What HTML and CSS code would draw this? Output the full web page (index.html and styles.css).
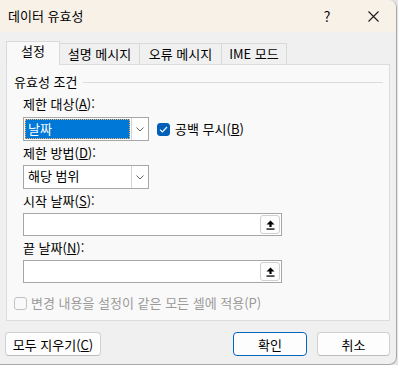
FILE: index.html
```html
<!DOCTYPE html>
<html lang="ko">
<head>
  <meta charset="UTF-8">
  <meta name="viewport" content="width=device-width, initial-scale=1.0">
  <title>데이터 유효성</title>
  <link rel="stylesheet" href="styles.css">
</head>
<body>
  <div class="window">
    <div class="titlebar">
      <span class="title">데이터 유효성</span>
      <span class="caption-btn help">?</span>
      <span class="caption-btn close">
        <svg width="11" height="11" viewBox="0 0 11 11"><path d="M0.5 0.5 L10.5 10.5 M10.5 0.5 L0.5 10.5" stroke="#1a1a1a" stroke-width="1.1" fill="none"/></svg>
      </span>
    </div>

    <div class="content">
      <div class="tabs">
        <div class="tab active tab-w1">설정</div>
        <div class="tab tab-w2">설명 메시지</div>
        <div class="tab tab-w3">오류 메시지</div>
        <div class="tab tab-w4">IME 모드</div>
      </div>

      <div class="panel">
        <div class="group-title">
          <span>유효성 조건</span>
          <span class="rule"></span>
        </div>

        <div class="fields">
          <div class="field-label first">제한 대상(<u>A</u>):</div>
          <div class="row">
            <div class="combo">
              <span class="combo-value"><span class="selected">날짜</span></span>
              <span class="combo-arrow">
                <svg width="8" height="5" viewBox="0 0 8 5"><path d="M0.5 0.5 L4 4 L7.5 0.5" stroke="#606060" stroke-width="1" fill="none"/></svg>
              </span>
            </div>
            <label class="check">
              <span class="box checked">
                <svg width="9" height="7" viewBox="0 0 9 7"><path d="M1 3.6 L3.4 6 L8 1" stroke="#fff" stroke-width="1.2" fill="none"/></svg>
              </span>
              <span>공백 무시(<u>B</u>)</span>
            </label>
          </div>

          <div class="field-label">제한 방법(<u>D</u>):</div>
          <div class="combo">
            <span class="combo-value"><span class="plain">해당 범위</span></span>
            <span class="combo-arrow">
              <svg width="8" height="5" viewBox="0 0 8 5"><path d="M0.5 0.5 L4 4 L7.5 0.5" stroke="#606060" stroke-width="1" fill="none"/></svg>
            </span>
          </div>

          <div class="field-label">시작 날짜(<u>S</u>):</div>
          <div class="ref-input">
            <span class="ref-btn">
              <svg width="9" height="10" viewBox="0 0 9 10"><path d="M4.5 0.5 L8.5 4.5 L5.6 4.5 L5.6 7 L3.4 7 L3.4 4.5 L0.5 4.5 Z" fill="#000"/><rect x="0.5" y="8.4" width="8" height="1.3" fill="#000"/></svg>
            </span>
          </div>

          <div class="field-label">끝 날짜(<u>N</u>):</div>
          <div class="ref-input">
            <span class="ref-btn">
              <svg width="9" height="10" viewBox="0 0 9 10"><path d="M4.5 0.5 L8.5 4.5 L5.6 4.5 L5.6 7 L3.4 7 L3.4 4.5 L0.5 4.5 Z" fill="#000"/><rect x="0.5" y="8.4" width="8" height="1.3" fill="#000"/></svg>
            </span>
          </div>
        </div>

        <label class="check disabled">
          <span class="box"></span>
          <span>변경 내용을 설정이 같은 모든 셀에 적용(P)</span>
        </label>
      </div>

      <div class="footer">
        <button class="btn btn-clear">모두 지우기(<u>C</u>)</button>
        <span class="spacer"></span>
        <button class="btn btn-ok">확인</button>
        <button class="btn btn-cancel">취소</button>
      </div>
    </div>
  </div>
</body>
</html>
```

FILE: styles.css
```css
* {
  box-sizing: border-box;
}
body {
  margin: 0;
  background-color: #e4e4e4;
  font-family: "Noto Sans CJK KR", sans-serif;
  font-size: 13px;
  color: #000;
}
u {
  text-decoration-thickness: 1px;
  text-underline-offset: 1px;
}
.window {
  width: 397px;
  height: 365px;
  background-color: #f0f0f0;
  border-right: 1px solid #a8a8a8;
  border-bottom: 1px solid #a8a8a8;
  border-radius: 0 8px 8px 0;
  overflow: hidden;
}
.titlebar {
  height: 32px;
  display: flex;
  align-items: center;
  background-color: #f7f1e8;
}
.title {
  flex: 1;
  padding-left: 8px;
  line-height: 16px;
}
.caption-btn {
  width: 46px;
  height: 32px;
  display: flex;
  align-items: center;
  justify-content: center;
}
.help {
  font-size: 14px;
}
.content {
  padding: 0 6px 0 6px;
}
.tabs {
  display: flex;
  align-items: flex-end;
  height: 23px;
  margin-top: 9px;
}
.tab {
  height: 21px;
  line-height: 19px;
  text-align: center;
  border: 1px solid #d9d9d9;
  border-bottom: none;
  background-color: #f0f0f0;
  margin-left: -1px;
}
.tab.active {
  height: 24px;
  line-height: 18px;
  margin-left: 0;
  margin-bottom: -1px;
  background-color: #f9f9f9;
  position: relative;
  z-index: 1;
}
.tab-w1 { width: 54px; }
.tab-w2 { width: 81px; }
.tab-w3 { width: 83px; }
.tab-w4 { width: 66px; }

.panel {
  height: 257px;
  border: 1px solid #dcdcdc;
  background-color: #f9f9f9;
  padding: 9px 6px 0 7px;
}
.group-title {
  display: flex;
  align-items: center;
  gap: 6px;
  line-height: 16px;
}
.rule {
  flex: 1;
  height: 1px;
  background-color: #dcdcdc;
  margin-top: 1px;
}
.fields {
  padding-left: 9px;
}
.field-label {
  line-height: 16px;
  height: 16px;
  margin-top: 4px;
  margin-bottom: 4px;
}
.field-label.first {
  margin-top: 6px;
  margin-bottom: 5px;
}
.row {
  display: flex;
  align-items: center;
}
.combo {
  width: 126px;
  height: 24px;
  display: flex;
  border: 1px solid #a6a6a6;
  background-color: #fff;
}
.combo-value {
  flex: 1;
  padding: 1px;
  display: flex;
}
.combo-value span {
  flex: 1;
  line-height: 18px;
  padding-left: 3px;
}
.combo-value .selected {
  background-color: #0078d7;
  color: #fff;
  border: 1px dotted #ffb062;
  padding-left: 2px;
}
.combo-arrow {
  width: 17px;
  border-left: 1px solid #d4d4d4;
  display: flex;
  align-items: center;
  justify-content: center;
}
.check {
  display: flex;
  align-items: center;
  gap: 5px;
  line-height: 16px;
}
.row .check {
  margin-left: 8px;
}
.box {
  width: 13px;
  height: 13px;
  border: 1px solid #c2c2c2;
  border-radius: 3px;
  display: flex;
  align-items: center;
  justify-content: center;
}
.box.checked {
  background-color: #005fb8;
  border-color: #005fb8;
}
.check.disabled {
  margin-top: 12px;
  gap: 4px;
  color: #9a9a9a;
}
.ref-input {
  width: 259px;
  height: 23px;
  border: 1px solid #a6a6a6;
  background-color: #fff;
  display: flex;
  justify-content: flex-end;
  padding: 1px 1px 1px 0;
}
.ref-btn {
  width: 20px;
  height: 19px;
  border: 1px solid #d0d0d0;
  border-radius: 3px;
  background-color: #fdfdfd;
  display: flex;
  align-items: center;
  justify-content: center;
}
.footer {
  display: flex;
  align-items: center;
  gap: 10px;
  margin-top: 11px;
}
.spacer {
  flex: 1;
}
.btn {
  height: 24px;
  padding: 0;
  font-family: inherit;
  font-size: 13px;
  color: #000;
  background-color: #fdfdfd;
  border: 1px solid #d0d0d0;
  border-bottom-color: #bdbdbd;
  border-radius: 4px;
}
.btn-clear {
  width: 96px;
  margin-left: -1px;
}
.btn-ok {
  width: 74px;
  border-color: #0067c0;
}
.btn-cancel {
  width: 73px;
}
```
